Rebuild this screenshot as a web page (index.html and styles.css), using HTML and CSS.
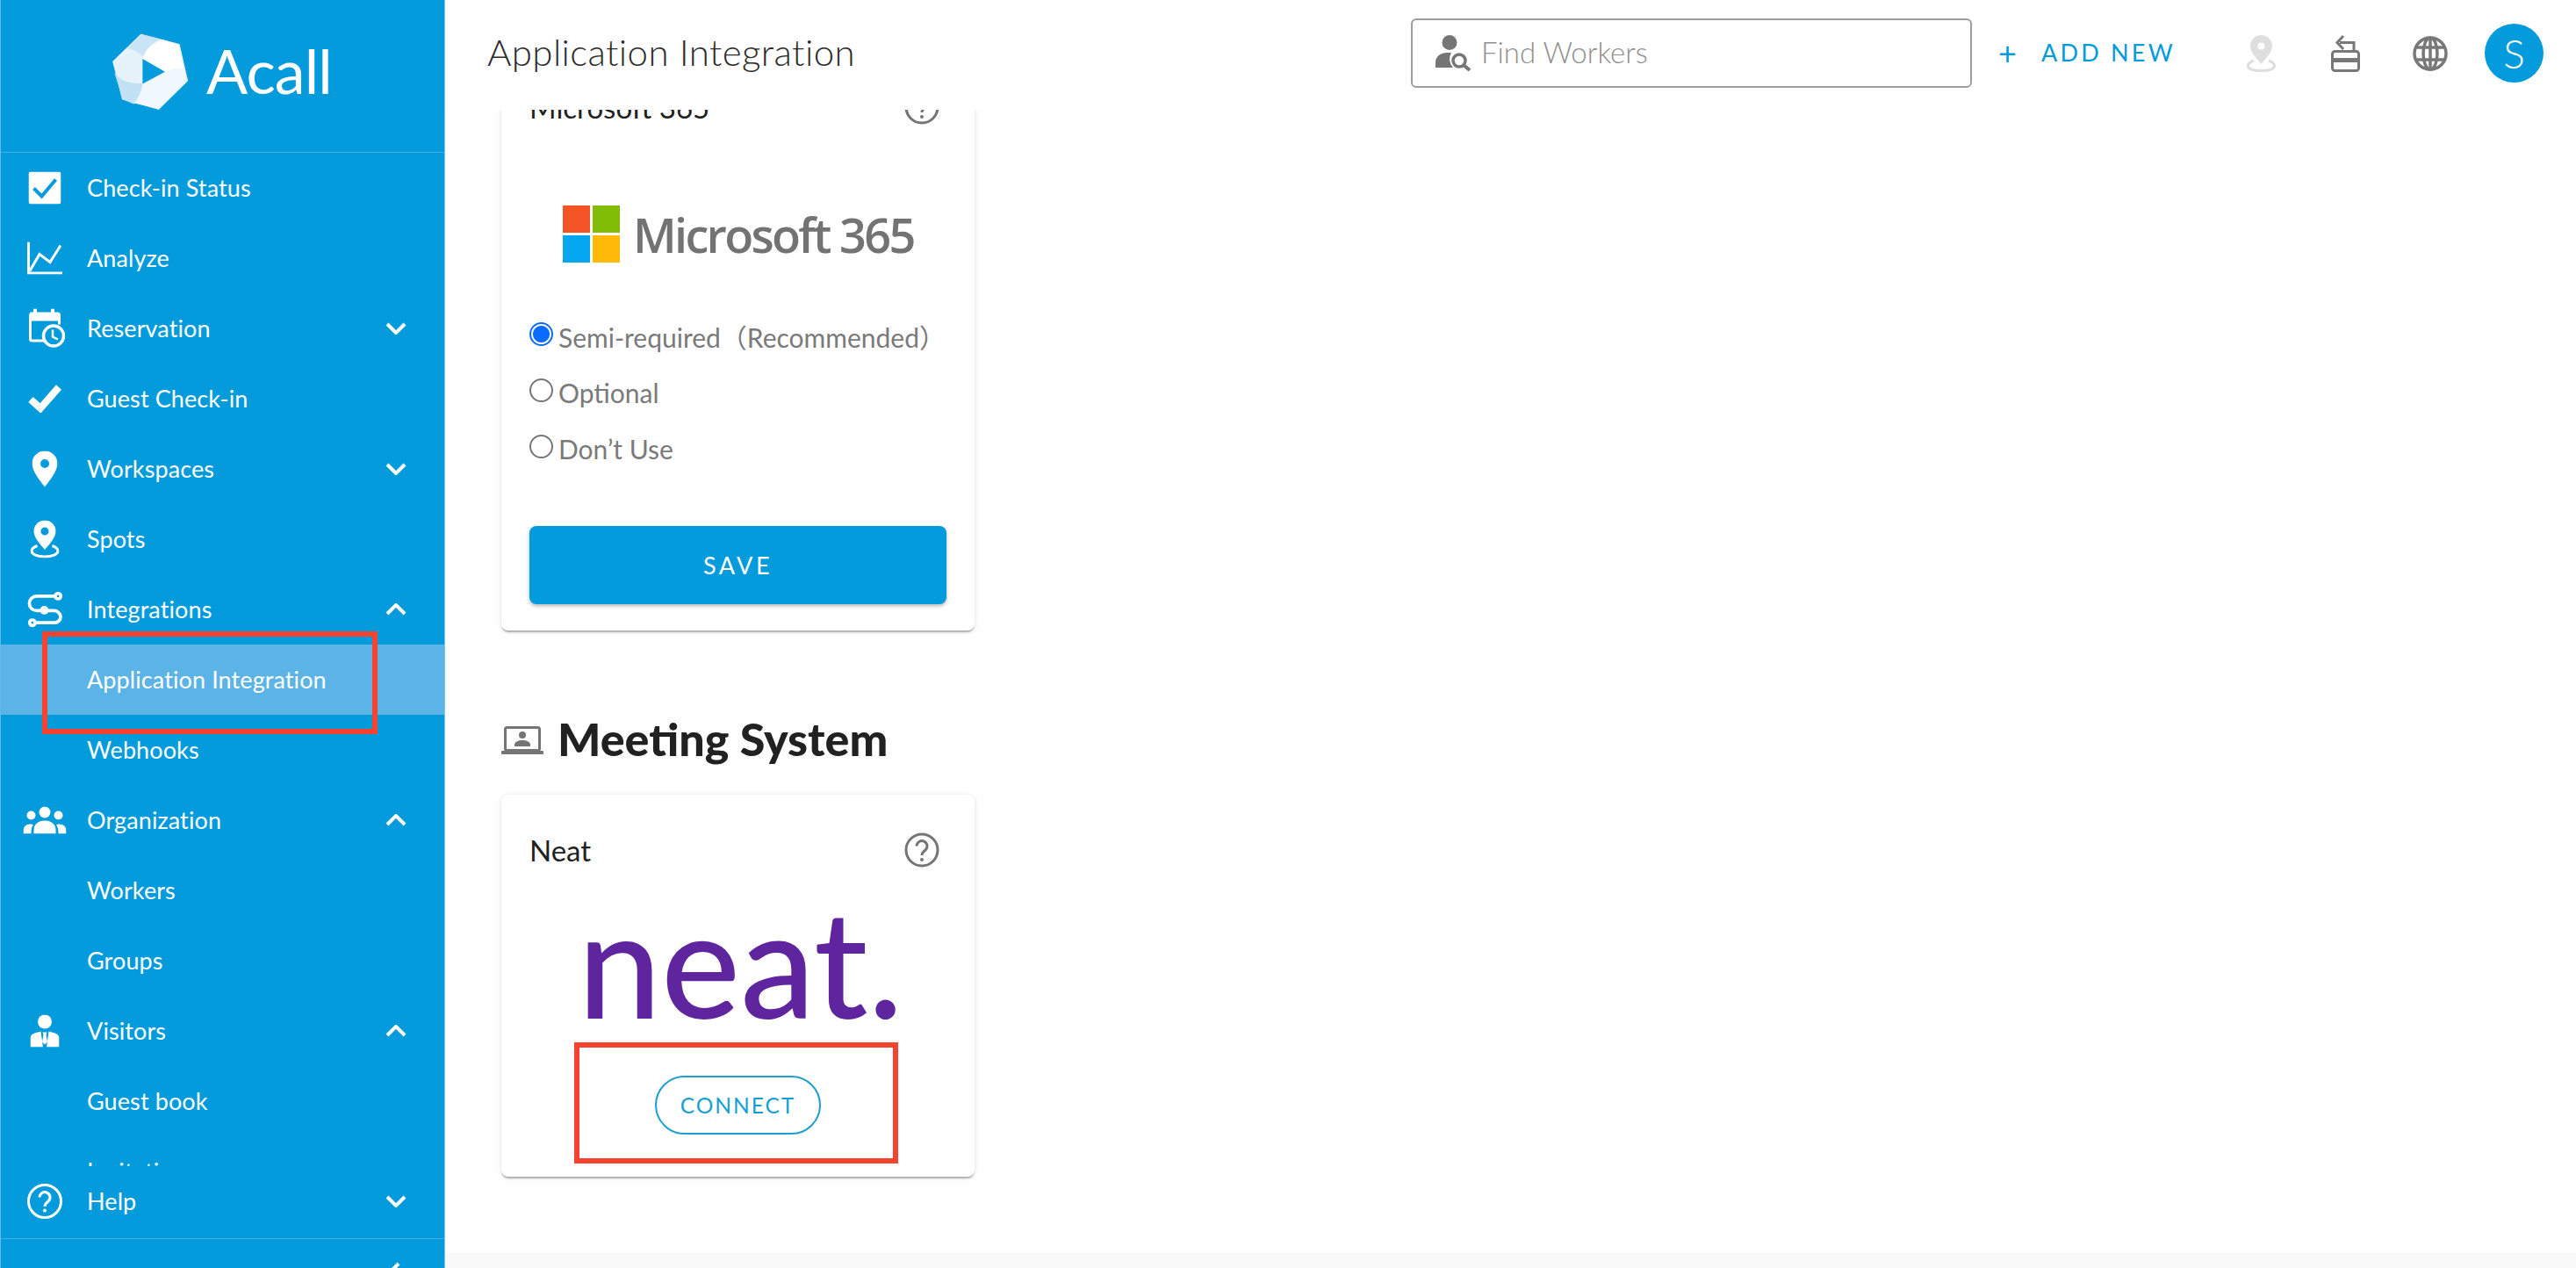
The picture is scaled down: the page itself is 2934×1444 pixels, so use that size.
FILE: index.html
```html
<!DOCTYPE html>
<html lang="en">
<head>
<meta charset="utf-8">
<title>Application Integration</title>
<link rel="stylesheet" href="styles.css">
</head>
<body>
<div class="app">
  <aside class="sidebar">
    <div class="brand">
      <svg class="brand-mark" viewBox="78 50 266 268">
        <path d="M180 58 310 92 338 215 240 312 117 278 85 150Z" fill="#e6f3fb" stroke="#e6f3fb" stroke-width="6" stroke-linejoin="round"/>
        <path d="M185 140C190 105 220 80 252 74L308 90 327 176C300 172 280 176 262 185Z" fill="#fff"/>
        <path d="M182 56 252 74C220 84 198 105 188 132 170 118 150 105 130 103Z" fill="#c9e4f5"/>
        <path d="M88 188C115 222 150 226 185 225 182 255 170 280 155 296L117 280Z" fill="#c3e1f4"/>
        <path d="M185 225 262 185C280 176 305 172 330 178L338 215 240 312 155 292C172 275 183 250 185 225Z" fill="#f1f8fd"/>
        <path d="M185 140 262 185 185 226Z" fill="#039bdc"/>
      </svg>
      <span class="brand-name">Acall</span>
    </div>
    <nav class="nav">
      <a class="nav-item">
        <svg class="ico ico-37" viewBox="0 0 37 37"><rect width="37" height="37" rx="3" fill="#fff"/><path d="M6 19 15 28 31 9" fill="none" stroke="#039bdc" stroke-width="4"/></svg>
        <span class="nav-label">Check-in Status</span>
      </a>
      <a class="nav-item">
        <svg class="ico ico-40" viewBox="0 0 40 37"><path d="M1.5 0V35.5H40" fill="none" stroke="#fff" stroke-width="3"/><path d="M3 33 14 14 26 23 38 4" fill="none" stroke="#fff" stroke-width="3"/></svg>
        <span class="nav-label">Analyze</span>
      </a>
      <a class="nav-item">
        <svg class="ico ico-res" viewBox="0 0 42 45"><path d="M6 0h4v6H6zM26 0h4v6h-4z" fill="#fff"/><path d="M2.5 5.500h31a2 2 0 0 1 2 2V18M20 36.500H4.500a2 2 0 0 1-2-2V7.500a2 2 0 0 1 2-2" fill="none" stroke="#fff" stroke-width="3"/><rect x="2" y="5" width="34" height="9" fill="#fff"/><circle cx="29" cy="31" r="11.500" fill="none" stroke="#fff" stroke-width="3.500"/><path d="M28 24v8l6 3" fill="none" stroke="#fff" stroke-width="2.500"/></svg>
        <span class="nav-label">Reservation</span>
        <svg class="chev" viewBox="0 0 24 14"><path d="M2 2 12 12 22 2"/></svg>
      </a>
      <a class="nav-item">
        <svg class="ico ico-guest" viewBox="0 0 38 32"><path d="M3 17 14 27 35 3" fill="none" stroke="#fff" stroke-width="8"/></svg>
        <span class="nav-label">Guest Check-in</span>
      </a>
      <a class="nav-item">
        <svg class="ico ico-pin" viewBox="0 0 29 41"><path fill-rule="evenodd" d="M14.500 0C6.500 0 0 6.300 0 14.300 0 23 9 34 14.500 41 20 34 29 23 29 14.300 29 6.300 22.500 0 14.500 0ZM14.500 9.500a5 5 0 1 1 0 10 5 5 0 0 1 0-10Z" fill="#fff"/></svg>
        <span class="nav-label">Workspaces</span>
        <svg class="chev" viewBox="0 0 24 14"><path d="M2 2 12 12 22 2"/></svg>
      </a>
      <a class="nav-item">
        <svg class="ico ico-spot" viewBox="0 0 33 43"><path fill-rule="evenodd" d="M16.500 0C9.500 0 4 5.500 4 12.500 4 20 12 28 16.500 33.500 21 28 29 20 29 12.500 29 5.500 23.500 0 16.500 0ZM16.500 8a4.500 4.500 0 1 1 0 9 4.500 4.500 0 0 1 0-9Z" fill="#fff"/><path d="M8 29C4 30.500 1.500 32.500 1.500 35c0 3.500 6.500 6.500 15 6.500s15-3 15-6.500c0-2.500-2.500-4.500-6.500-6" fill="none" stroke="#fff" stroke-width="3"/></svg>
        <span class="nav-label">Spots</span>
      </a>
      <a class="nav-item">
        <svg class="ico ico-40h" viewBox="0 0 41 41"><g fill="none" stroke="#fff" stroke-width="3.800"><circle cx="36" cy="5" r="3.200"/><circle cx="6" cy="36" r="3.200"/><path d="M32 5H11a8.500 8.500 0 0 0 0 17h20a8 8 0 0 1 8 7v0a7 7 0 0 1-7 7H10"/></g><circle cx="20" cy="21.500" r="5" fill="#fff"/></svg>
        <span class="nav-label">Integrations</span>
        <svg class="chev" viewBox="0 0 24 14"><path d="M2 12 12 2 22 12"/></svg>
      </a>
      <a class="nav-item nav-item-active">
        <span class="nav-label">Application Integration</span>
        <span class="callout callout-nav"></span>
      </a>
      <a class="nav-item">
        <span class="nav-label">Webhooks</span>
      </a>
      <a class="nav-item">
        <svg class="ico ico-org" viewBox="0 0 49 31"><g fill="#fff"><circle cx="24.500" cy="6.500" r="6.500"/><circle cx="9" cy="10" r="5"/><circle cx="40" cy="10" r="5"/><path d="M12 31v-4c0-7 5-11 12.500-11S37 20 37 27v4Z"/><path d="M0 31v-3c0-5 3-8 8-8 1.500 0 2.500.3 3.500.7C9.500 23 9 26 9 31Z"/><path d="M49 31v-3c0-5-3-8-8-8-1.500 0-2.500.3-3.500.7 2 2.300 2.500 5.300 2.500 10.300Z"/></g></svg>
        <span class="nav-label">Organization</span>
        <svg class="chev" viewBox="0 0 24 14"><path d="M2 12 12 2 22 12"/></svg>
      </a>
      <a class="nav-item">
        <span class="nav-label">Workers</span>
      </a>
      <a class="nav-item">
        <span class="nav-label">Groups</span>
      </a>
      <a class="nav-item">
        <svg class="ico ico-vis" viewBox="0 0 33 37"><circle cx="16.500" cy="8" r="8" fill="#fff"/><path d="M0 37V27c0-3 2-5 5-6l7-2 2.500 18ZM33 37V27c0-3-2-5-5-6l-7-2-2.500 18Z" fill="#fff"/><path d="M14 20h5l-1 3 1.500 8-3 3-3-3 1.500-8Z" fill="#fff"/></svg>
        <span class="nav-label">Visitors</span>
        <svg class="chev" viewBox="0 0 24 14"><path d="M2 12 12 2 22 12"/></svg>
      </a>
      <a class="nav-item">
        <span class="nav-label">Guest book</span>
      </a>
      <a class="nav-item">
        <span class="nav-label">Invitations</span>
      </a>
    </nav>
    <a class="nav-item">
      <svg class="ico ico-40h" viewBox="0 0 40 40"><circle cx="20" cy="20" r="18.500" fill="none" stroke="#fff" stroke-width="3"/><path d="M14 15.500a6 6 0 1 1 9.500 5C21 22.300 20 23.500 20 26" fill="none" stroke="#fff" stroke-width="3"/><circle cx="20" cy="30.500" r="2" fill="#fff"/></svg>
      <span class="nav-label">Help</span>
      <svg class="chev" viewBox="0 0 24 14"><path d="M2 2 12 12 22 2"/></svg>
    </a>
    <div class="side-foot">
      <svg class="foot-chev" viewBox="0 0 14 24"><path d="M12 2 2 12 12 22"/></svg>
    </div>
  </aside>

  <div class="main">
    <header class="topbar">
      <h1 class="page-title">Application Integration</h1>
      <div class="search">
        <svg class="search-ico" viewBox="0 0 41 41"><circle cx="16" cy="8.500" r="8.500" fill="#757575"/><path d="M0 37v-6c0-6 5-11 13-11h5a14 14 0 0 0 2 17Z" fill="#757575"/><circle cx="27" cy="29" r="7" fill="none" stroke="#757575" stroke-width="3.500"/><path d="M32 34 39 40" stroke="#757575" stroke-width="4"/></svg>
        <span class="search-text">Find Workers</span>
      </div>
      <a class="add-new"><span class="add-plus">+</span><span>ADD NEW</span></a>
      <div class="top-icons">
        <svg class="top-ico top-pin" viewBox="0 0 33 42"><path fill-rule="evenodd" d="M16.500 0C9.500 0 4 5.500 4 12.500 4 20 12 27 16.500 33 21 27 29 20 29 12.500 29 5.500 23.500 0 16.500 0ZM16.500 8.500a4 4 0 1 1 0 8 4 4 0 0 1 0-8Z" fill="#dedede"/><path d="M8 29C4 30.500 1.500 32.500 1.500 35c0 3.500 6.500 5.500 15 5.500s15-2 15-5.500c0-2.500-2.500-4.500-6.500-6" fill="none" stroke="#dedede" stroke-width="3"/></svg>
        <svg class="top-ico top-desk" viewBox="0 0 33 43"><g fill="none" stroke="#787878"><path d="M26 18V9.500H10" stroke-width="3"/><path d="M14 2 7 9.500 14 17" stroke-width="3"/><rect x="1.500" y="19.500" width="30" height="22" rx="3" stroke-width="3"/><path d="M1 27h31v5H1Z" fill="#787878" stroke="none"/></g></svg>
        <svg class="top-ico top-globe" viewBox="0 0 40 40"><g fill="none" stroke="#787878" stroke-width="3.500"><circle cx="20" cy="20" r="18"/><ellipse cx="20" cy="20" rx="8" ry="18"/><path d="M4 13h32M4 27h32M20 2v36"/></g></svg>
        <span class="avatar">S</span>
      </div>
    </header>
    <div class="viewport">
      <div class="scroller">
        <section class="card card-ms">
          <div class="card-head">
            <span class="card-title">Microsoft 365</span>
            <svg class="help" viewBox="0 0 40 40"><circle cx="20" cy="20" r="18" fill="none" stroke="#757575" stroke-width="3"/><path d="M14 15.500a6 6 0 1 1 9.500 5C21 22.300 20 23.500 20 26" fill="none" stroke="#757575" stroke-width="3"/><circle cx="20" cy="31" r="2" fill="#757575"/></svg>
          </div>
          <div class="ms-logo">
            <div class="ms-grid">
              <span class="ms-a"></span><span class="ms-b"></span><span class="ms-c"></span><span class="ms-d"></span>
            </div>
            <span class="ms-name">Microsoft 365</span>
          </div>
          <div class="radios">
            <label class="radio"><input type="radio" name="mode" checked><span>Semi-required（Recommended）</span></label>
            <label class="radio"><input type="radio" name="mode"><span>Optional</span></label>
            <label class="radio"><input type="radio" name="mode"><span>Don’t Use</span></label>
          </div>
          <button class="save">SAVE</button>
        </section>

        <h2 class="section-head">
          <svg class="section-ico" viewBox="0 0 48 32"><rect x="4.500" y="1.500" width="39" height="26" rx="2" fill="none" stroke="#757575" stroke-width="3"/><rect y="28" width="48" height="4" rx="1" fill="#757575"/><circle cx="24" cy="10" r="4" fill="#757575"/><path d="M15 23v-2c0-3 4-5 9-5s9 2 9 5v2Z" fill="#757575"/></svg>
          <span class="section-text">Meeting System</span>
        </h2>

        <section class="card card-neat">
          <div class="card-head">
            <span class="card-title">Neat</span>
            <svg class="help" viewBox="0 0 40 40"><circle cx="20" cy="20" r="18" fill="none" stroke="#757575" stroke-width="3"/><path d="M14 15.500a6 6 0 1 1 9.500 5C21 22.300 20 23.500 20 26" fill="none" stroke="#757575" stroke-width="3"/><circle cx="20" cy="31" r="2" fill="#757575"/></svg>
          </div>
          <div class="neat-logo">neat.</div>
          <div class="connect-wrap">
            <button class="connect">CONNECT</button>
            <span class="callout callout-connect"></span>
          </div>
        </section>
      </div>
      <div class="page-foot"></div>
    </div>
  </div>
</div>
</body>
</html>
```

FILE: styles.css
```css
* { box-sizing: border-box; }

html, body {
  margin: 0;
  height: 100%;
  overflow: hidden;
  background: #fefefe;
  font-family: Lato, "Noto Sans CJK JP", sans-serif;
}

.app {
  display: flex;
  height: 1444px;
}

/* Sidebar */
.sidebar {
  width: 507px;
  flex: none;
  height: 100%;
  display: flex;
  flex-direction: column;
  background: #039bdc;
  border-left: 1px solid #5fbde8;
  border-right: 1px solid #7cc8ea;
  color: #fff;
}

.brand {
  height: 174px;
  flex: none;
  display: flex;
  align-items: flex-start;
  padding: 37px 0 0 126px;
  gap: 20px;
  border-bottom: 1px solid #3fb1e4;
}

.brand-mark { width: 88px; height: 89px; flex: none; }

.brand-name {
  font-size: 70px;
  font-weight: 400;
  line-height: 86px;
  letter-spacing: -1px;
}

.nav {
  flex: none;
  height: 1154px;
  overflow: hidden;
}

.nav-item {
  position: relative;
  height: 80px;
  flex: none;
  display: flex;
  align-items: center;
  padding-left: 98px;
  padding-right: 43px;
  font-size: 27px;
  letter-spacing: .1px;
}

.nav-item-active { background: #5bb3e6; }

.nav-label {
  flex: 1;
  position: relative;
  top: -1px;
}

.ico {
  position: absolute;
  left: 50px;
  top: 50%;
  transform: translate(-50%, -50%);
}

.ico-37 { width: 37px; height: 37px; }
.ico-40 { width: 40px; height: 37px; }
.ico-40h { width: 40px; height: 40px; }
.ico-res { width: 42px; height: 45px; margin-left: 2px; }
.ico-guest { width: 38px; height: 32px; }
.ico-pin { width: 29px; height: 41px; }
.ico-spot { width: 33px; height: 43px; }
.ico-org { width: 49px; height: 31px; }
.ico-vis { width: 33px; height: 37px; }

.chev {
  width: 24px;
  height: 14px;
  flex: none;
}

.chev path, .foot-chev path {
  fill: none;
  stroke: #fff;
  stroke-width: 4;
}

.side-foot {
  flex: 1;
  min-height: 0;
  overflow: hidden;
  margin-top: 2px;
  border-top: 1px solid #3fb1e4;
  display: flex;
  justify-content: flex-end;
  padding: 26px 50px 0 0;
}

.foot-chev { width: 14px; height: 24px; flex: none; }

.callout {
  position: absolute;
  border: 6px solid #f6432f;
  pointer-events: none;
}

.callout-nav {
  left: 47px;
  top: -15px;
  width: 382px;
  height: 117px;
}

/* Main */
.main {
  flex: 1;
  min-width: 0;
  display: flex;
  flex-direction: column;
}

.topbar {
  height: 125px;
  flex: none;
  display: flex;
  align-items: flex-start;
  padding: 21px 38px 0 48px;
  background: #fff;
}

.page-title {
  margin: 0;
  width: 1052px;
  flex: none;
  font-size: 42px;
  font-weight: 300;
  letter-spacing: .4px;
  line-height: 77px;
  color: #2b2b2b;
}

.search {
  width: 639px;
  height: 79px;
  flex: none;
  display: flex;
  align-items: center;
  gap: 11px;
  padding: 0 0 3px 26px;
  border: 2px solid #9e9e9e;
  border-radius: 6px;
}

.search-ico { width: 41px; height: 41px; flex: none; margin-top: 3px; }

.search-text {
  font-size: 33px;
  font-weight: 300;
  color: #8f8f8f;
}

.add-new {
  display: flex;
  align-items: center;
  height: 77px;
  margin-left: 30px;
  width: 202px;
  flex: none;
  font-size: 27px;
  letter-spacing: 3.200px;
  color: #039bdc;
}

.add-plus {
  width: 49px;
  font-size: 36px;
  font-weight: 400;
  letter-spacing: 0;
}

.top-icons {
  flex: 1;
  display: flex;
  align-items: center;
  height: 79px;
  margin-left: 81px;
}

.top-ico { flex: none; }
.top-pin { width: 33px; height: 42px; margin-left: 0; }
.top-desk { width: 33px; height: 43px; margin-left: 63px; }
.top-globe { width: 40px; height: 40px; margin-left: 60px; }

.avatar {
  width: 67px;
  height: 67px;
  flex: none;
  margin-left: 42px;
  border-radius: 50%;
  background: #039bdc;
  color: #fff;
  font-size: 46px;
  font-weight: 300;
  display: flex;
  align-items: center;
  justify-content: center;
}

.viewport {
  flex: 1;
  min-height: 0;
  overflow: hidden;
  position: relative;
}

.scroller {
  margin-top: -66px;
  padding-left: 64px;
}

.page-foot {
  position: absolute;
  left: 0;
  right: 0;
  bottom: 0;
  height: 17px;
  background: #f9f9f9;
}

/* Cards */
.card {
  width: 539px;
  background: #fff;
  border-radius: 8px;
  padding: 43px 32px 0;
  box-shadow: 0 3px 2px -1px rgba(0,0,0,.28), 0 1px 5px rgba(0,0,0,.12);
}

.card-ms { height: 659px; }
.card-neat { height: 435px; }

.card-head {
  display: flex;
  align-items: center;
  justify-content: space-between;
  height: 40px;
  padding-right: 8px;
}

.card-title {
  font-size: 33px;
  line-height: 36px;
  color: #212121;
}

.help { width: 40px; height: 40px; flex: none; }

.ms-logo {
  display: flex;
  align-items: center;
  gap: 15px;
  margin: 92px 0 0 38px;
  height: 65px;
}

.ms-grid {
  width: 65px;
  height: 65px;
  flex: none;
  display: grid;
  grid-template-columns: 1fr 1fr;
  gap: 3px;
}

.ms-a { background: #f35325; }
.ms-b { background: #81bc06; }
.ms-c { background: #05a6f0; }
.ms-d { background: #ffba08; }

.ms-name {
  font-family: "Open Sans", sans-serif;
  font-size: 54px;
  font-weight: 600;
  letter-spacing: -2.700px;
  color: #737373;
  white-space: nowrap;
}

.radios {
  margin-top: 61px;
  display: flex;
  flex-direction: column;
  gap: 24px;
}

.radio {
  display: flex;
  align-items: center;
  height: 40px;
  gap: 6px;
  font-size: 30px;
  color: #7a7a7a;
}

.radio span { position: relative; top: 3px; }

.radio input {
  appearance: none;
  width: 27px;
  height: 27px;
  margin: 0;
  flex: none;
  border: 2px solid #767676;
  border-radius: 50%;
  background: #fff;
}

.radio input:checked {
  border-color: #0a6cff;
  background: radial-gradient(circle, #0a6cff 0 9px, #fff 10px);
}

.save {
  display: block;
  width: 475px;
  height: 89px;
  margin-top: 71px;
  border: 0;
  border-radius: 8px;
  background: #039bdc;
  color: #fff;
  font: inherit;
  font-size: 27px;
  letter-spacing: 3.500px;
  box-shadow: 0 2px 4px rgba(0,0,0,.3);
}

.section-head {
  display: flex;
  align-items: center;
  gap: 16px;
  height: 60px;
  margin: 95px 0 0;
  font-size: 52px;
  font-weight: 900;
  color: #212121;
}

.section-text { position: relative; top: -2px; }

.section-ico { width: 48px; height: 32px; flex: none; }

.section-head + .card { margin-top: 32px; }

.neat-logo {
  margin-top: 50px;
  height: 112px;
  padding-left: 55px;
  font-size: 170px;
  line-height: 112px;
  font-weight: 500;
  color: #5f259f;
}

.connect-wrap {
  position: relative;
  display: flex;
  justify-content: center;
  margin-top: 75px;
}

.connect {
  width: 189px;
  height: 67px;
  padding: 0;
  border: 2px solid #1f9fd0;
  border-radius: 34px;
  background: #fff;
  color: #159fd6;
  font: inherit;
  font-size: 24.500px;
  letter-spacing: 2px;
}

.callout-connect {
  left: 51px;
  top: -38px;
  width: 369px;
  height: 138px;
}
```
